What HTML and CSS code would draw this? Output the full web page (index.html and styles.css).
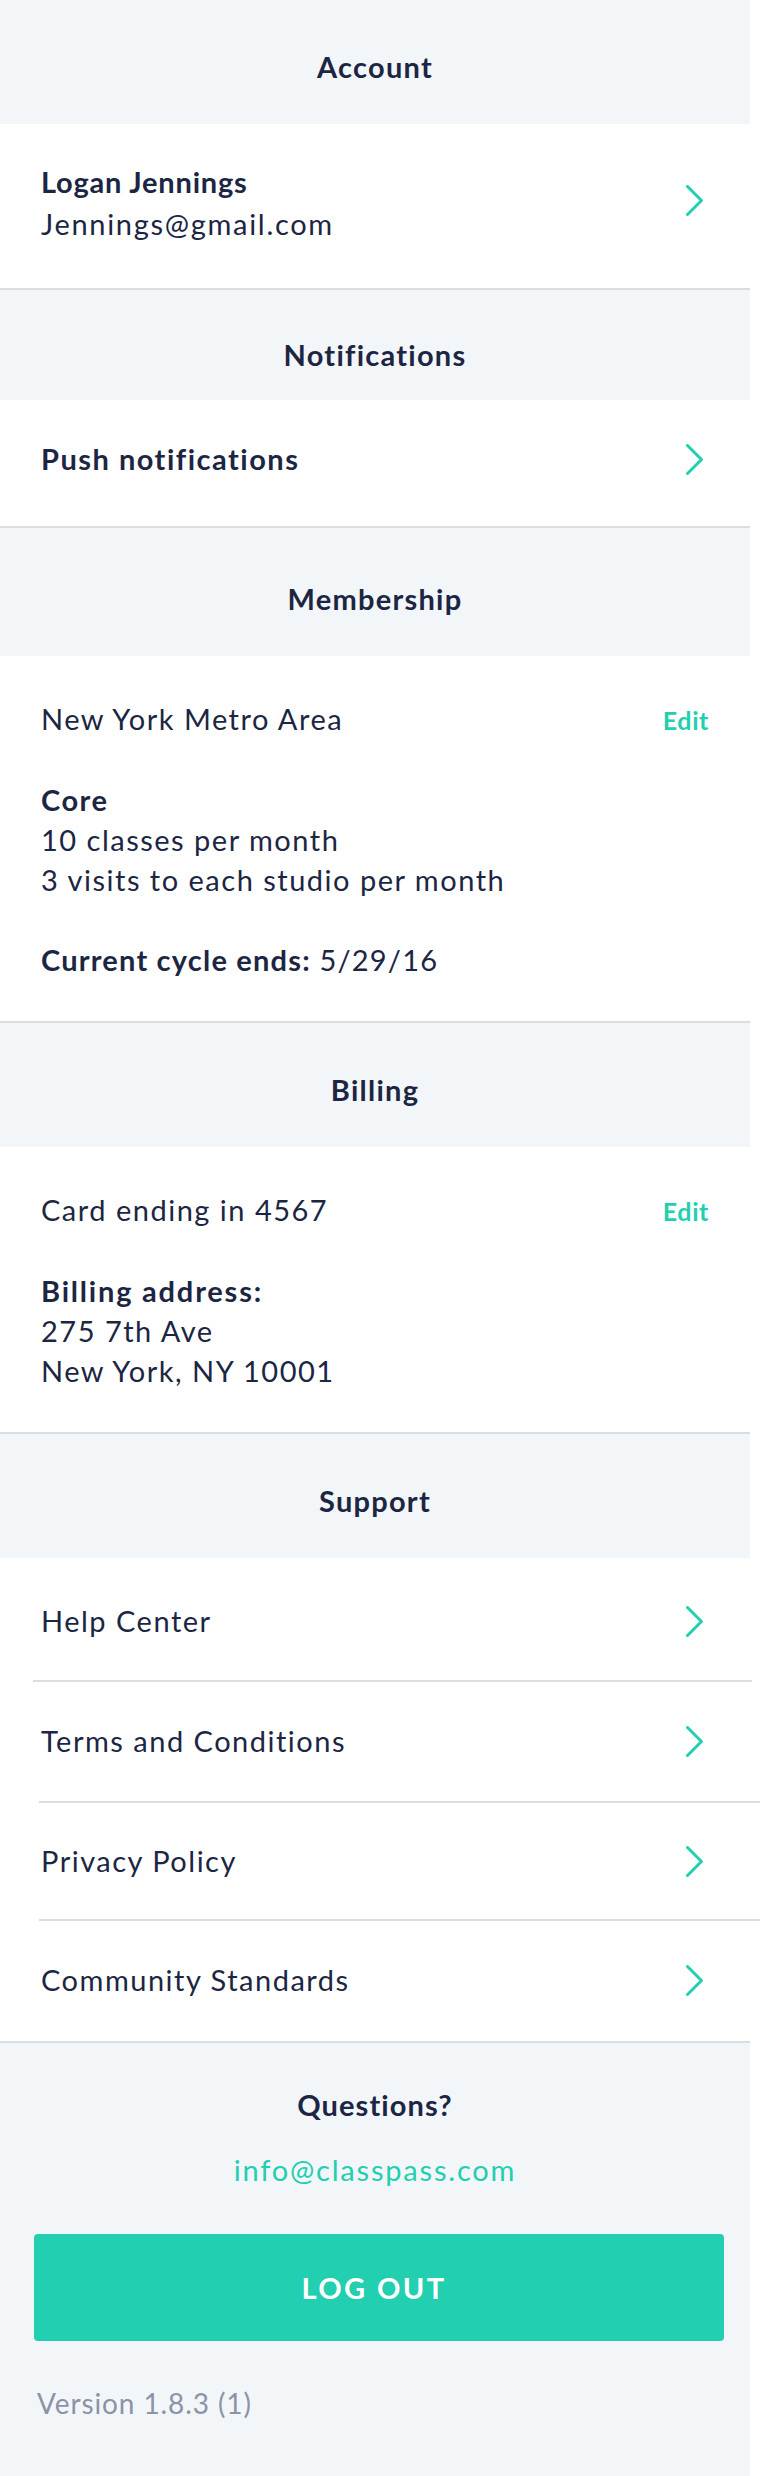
FILE: index.html
```html
<!DOCTYPE html>
<html lang="en">
<head>
<meta charset="utf-8">
<title>Settings</title>
<link rel="stylesheet" href="styles.css">
</head>
<body>
<div class="page">

  <div class="section-head head-a">Account</div>
  <div class="row row-account">
    <div class="row-text">
      <div class="strong name">Logan Jennings</div>
      <div class="sub">Jennings@gmail.com</div>
    </div>
    <svg class="chev chev-up" width="17" height="31" viewBox="0 0 17 31"><polyline points="1.5,1.5 15.5,15.5 1.5,29.5"/></svg>
  </div>

  <div class="section-head head-b">Notifications</div>
  <div class="row row-push">
    <div class="strong">Push notifications</div>
    <svg class="chev" width="17" height="31" viewBox="0 0 17 31"><polyline points="1.5,1.5 15.5,15.5 1.5,29.5"/></svg>
  </div>

  <div class="section-head head-c">Membership</div>
  <div class="card card-member">
    <div class="line-edit"><span>New York Metro Area</span><span class="edit">Edit</span></div>
    <div class="block">
      <div class="strong">Core</div>
      <div>10 classes per month</div>
      <div>3 visits to each studio per month</div>
    </div>
    <div class="block cycle"><span class="strong">Current cycle ends:</span> 5/29/16</div>
  </div>

  <div class="section-head head-a">Billing</div>
  <div class="card card-billing">
    <div class="line-edit"><span>Card ending in 4567</span><span class="edit">Edit</span></div>
    <div class="block">
      <div class="strong address">Billing address:</div>
      <div>275 7th Ave</div>
      <div>New York, NY 10001</div>
    </div>
  </div>

  <div class="section-head head-a">Support</div>
  <div class="support">
    <div class="row link link-1">
      <span>Help Center</span>
      <svg class="chev" width="17" height="31" viewBox="0 0 17 31"><polyline points="1.5,1.5 15.5,15.5 1.5,29.5"/></svg>
    </div>
    <div class="divider divider-first"></div>
    <div class="row link link-2">
      <span>Terms and Conditions</span>
      <svg class="chev" width="17" height="31" viewBox="0 0 17 31"><polyline points="1.5,1.5 15.5,15.5 1.5,29.5"/></svg>
    </div>
    <div class="divider"></div>
    <div class="row link link-3">
      <span>Privacy Policy</span>
      <svg class="chev" width="17" height="31" viewBox="0 0 17 31"><polyline points="1.5,1.5 15.5,15.5 1.5,29.5"/></svg>
    </div>
    <div class="divider"></div>
    <div class="row link link-4">
      <span>Community Standards</span>
      <svg class="chev" width="17" height="31" viewBox="0 0 17 31"><polyline points="1.5,1.5 15.5,15.5 1.5,29.5"/></svg>
    </div>
  </div>

  <div class="footer">
    <div class="questions">Questions?</div>
    <div class="mail">info@classpass.com</div>
    <div class="logout">LOG OUT</div>
    <div class="version">Version 1.8.3 (1)</div>
  </div>

</div>
</body>
</html>
```

FILE: styles.css
```css
* { box-sizing: border-box; }

html, body {
  margin: 0;
  padding: 0;
  background: #ffffff;
}

body {
  font-family: "Lato", "Open Sans", sans-serif;
  font-size: 29px;
  line-height: 40px;
  letter-spacing: 1.5px;
  color: #1c2643;
}

.page {
  width: 750px;
  min-height: 2476px;
  background: #f3f6f9;
}

.strong { font-weight: 700; letter-spacing: 1.5px; }
.name { letter-spacing: 0.8px; }
.cycle { letter-spacing: 1.2px; }
.cycle .strong { letter-spacing: 1.2px; }
.address { letter-spacing: 1.8px; }

.section-head {
  text-align: center;
  font-weight: 700;
  letter-spacing: 1.25px;
  background: #f3f6f9;
}
.head-a { height: 124px; padding-top: 47px; }
.head-b { height: 110px; padding-top: 45px; }
.head-c { height: 128px; padding-top: 51px; }

.row {
  display: flex;
  align-items: center;
  justify-content: space-between;
  background: #ffffff;
  padding-left: 41px;
  padding-right: 47px;
}

.row-account {
  height: 166px;
  padding-top: 38px;
  padding-bottom: 44px;
  border-bottom: 2px solid #dcdde1;
}
.row-account .sub { margin-top: 2px; letter-spacing: 1.7px; }
.chev-up { margin-bottom: 6px; }

.row-push {
  height: 128px;
  padding-top: 39px;
  padding-bottom: 47px;
  border-bottom: 2px solid #dcdde1;
}

.chev { flex: none; }
.chev polyline {
  fill: none;
  stroke: #22cfb0;
  stroke-width: 3;
  stroke-linecap: round;
  stroke-linejoin: miter;
}

.card {
  background: #ffffff;
  padding-left: 41px;
  padding-right: 41px;
  border-bottom: 2px solid #dcdde1;
  display: flex;
  flex-direction: column;
  gap: 40px;
}
.card-member { padding-top: 43px; padding-bottom: 41px; }
.card-billing { padding-top: 43px; padding-bottom: 41px; }

.line-edit {
  display: flex;
  justify-content: space-between;
  align-items: baseline;
}
.edit {
  color: #22cfb0;
  font-weight: 700;
  font-size: 25px;
  letter-spacing: 0.6px;
}

.support {
  background: #ffffff;
  border-bottom: 2px solid #dcdde1;
}
.link-1 { height: 122px; padding-top: 43px; padding-bottom: 39px; }
.link-2 { height: 119px; padding-top: 39px; padding-bottom: 40px; }
.link-3 { height: 116px; padding-top: 38px; padding-bottom: 38px; }
.link-4 { height: 120px; padding-top: 39px; padding-bottom: 41px; }

.divider {
  height: 2px;
  background: #dcdde1;
  margin-left: 39px;
  width: 721px;
}
.divider-first {
  margin-left: 33px;
  width: 719px;
}

.footer {
  background: #f3f6f9;
  padding-top: 42px;
  display: flex;
  flex-direction: column;
}
.questions {
  text-align: center;
  font-weight: 700;
  letter-spacing: 1.1px;
}
.mail {
  margin-top: 25px;
  text-align: center;
  color: #22cfb0;
  letter-spacing: 1.8px;
}
.logout {
  margin-top: 44px;
  margin-left: 34px;
  width: 690px;
  height: 107px;
  padding-right: 10px;
  background: #22cfb0;
  border-radius: 4px;
  color: #ffffff;
  font-weight: 700;
  letter-spacing: 2.4px;
  display: flex;
  align-items: center;
  justify-content: center;
}
.version {
  margin-top: 42px;
  padding-left: 37px;
  font-size: 28px;
  color: #8b93a7;
  letter-spacing: 0.9px;
}
```
